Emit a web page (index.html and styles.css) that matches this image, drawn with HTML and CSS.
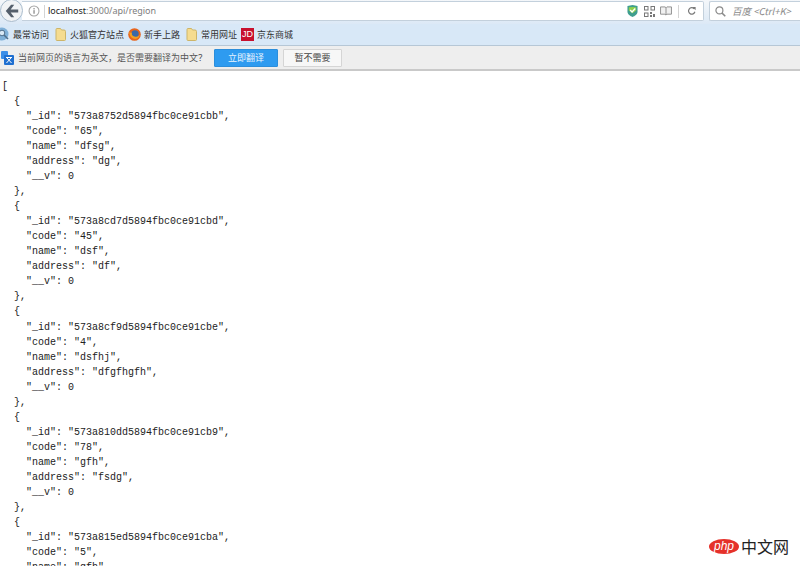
FILE: index.html
```html
<!DOCTYPE html>
<html lang="zh">
<head>
<meta charset="utf-8">
<title>localhost:3000/api/region</title>
<link rel="stylesheet" href="styles.css">
</head>
<body>
<header class="chrome">
  <div class="navbar">
    <div class="back">
      <svg width="18" height="16" viewBox="0 0 20 18"><path d="M9 2 3 9l6 7h3.500L8.500 10.600H17V7.400H8.500L12.500 2z" fill="#555f6b"/></svg>
    </div>
    <div class="urlbar">
      <svg class="info" width="12" height="12" viewBox="0 0 14 14"><circle cx="7" cy="7" r="5.800" fill="none" stroke="#a3a3a3" stroke-width="1.200"/><rect x="6.300" y="6" width="1.500" height="4.200" fill="#8a8a8a"/><rect x="6.300" y="3.600" width="1.500" height="1.500" fill="#8a8a8a"/></svg>
      <span class="sep"></span>
      <span class="url"><span class="host">localhost</span>:3000/api/region</span>
      <span class="spacer"></span>
      <svg class="tool" width="11" height="12" viewBox="0 0 12 13"><path d="M.5 1 6 0l5.500 1v6c0 3-3 5-5.500 6C3.500 12 .5 10 .5 7z" fill="#3f9e8f"/><path d="M2 2.500 6 2l4 .5v3.500l-4 3-4-3z" fill="#8fd04c"/><path d="M3.500 5.500 5.500 7.500 9 3.800" fill="none" stroke="#fff" stroke-width="1.500"/></svg>
      <svg class="tool qr" width="11" height="11" viewBox="0 0 11 11"><g fill="none" stroke="#777"><rect x=".5" y=".5" width="3.500" height="3.500"/><rect x="7" y=".5" width="3.500" height="3.500"/><rect x=".5" y="7" width="3.500" height="3.500"/></g><path d="M6 6h2v2H6zM9 8h2v3H9zM6 9h2v2H6z" fill="#777"/></svg>
      <svg class="tool book" width="12" height="10" viewBox="0 0 13 11"><path d="M.5 1h5L6.500 2 7.500 1h5v8h-5l-1 1-1-1h-5z" fill="#f1f1f1" stroke="#8a8a8a"/><path d="M6.500 2v8" stroke="#8a8a8a"/></svg>
      <span class="sep sep-tool"></span>
      <svg class="reload" width="9" height="10" viewBox="0 0 12 12"><path d="M9.500 3A4.300 4.300 0 1 0 10.500 7" fill="none" stroke="#7a7a7a" stroke-width="1.600"/><path d="M7 .5h4.500V5z" fill="#7a7a7a"/></svg>
    </div>
    <div class="searchbar">
      <svg width="11" height="11" viewBox="0 0 12 12"><circle cx="4.800" cy="4.800" r="3.800" fill="none" stroke="#8a8a8a" stroke-width="1.300"/><path d="m7.600 7.600 3.600 3.600" stroke="#8a8a8a" stroke-width="1.800"/></svg>
      <span class="search-text">百度 &lt;Ctrl+K&gt;</span>
    </div>
  </div>
  <nav class="bookmarks">
    <svg class="mark-first" width="9" height="15" viewBox="0 0 9 15"><circle cx="2" cy="7" r="6.500" fill="#7fb0d8"/><circle cx="2" cy="6" r="2.800" fill="#d9e9f6" stroke="#4f6f8c"/><path d="m4 8 4 4" stroke="#4f6f8c" stroke-width="1.600"/></svg>
    <span class="mark">最常访问</span>
    <svg class="folder" width="11" height="13" viewBox="0 0 11 13"><path d="M1 1.500Q1 .5 2 .5h3.500l1 1.500H9q1.500 0 1.500 1.500v8q0 1-1 1H2q-1 0-1-1z" fill="#f5dc90" stroke="#cdb569"/></svg>
    <span class="mark">火狐官方站点</span>
    <svg class="fox" width="13" height="13" viewBox="0 0 13 13"><circle cx="6.500" cy="6.500" r="6.300" fill="#e8641c"/><circle cx="7" cy="6" r="3.700" fill="#3a69a8"/><path d="M1 4Q2 11 7.500 11 11 10.500 11.800 6.500 10 9.500 6.500 8.500 3 7.500 4 4.500 2.500 5 1 4z" fill="#f0a022"/></svg>
    <span class="mark">新手上路</span>
    <svg class="folder" width="11" height="13" viewBox="0 0 11 13"><path d="M1 1.500Q1 .5 2 .5h3.500l1 1.500H9q1.500 0 1.500 1.500v8q0 1-1 1H2q-1 0-1-1z" fill="#f5dc90" stroke="#cdb569"/></svg>
    <span class="mark">常用网址</span>
    <span class="jd">JD</span>
    <span class="mark">京东商城</span>
  </nav>
  <div class="translate">
    <svg class="tr-icon" width="13" height="14" viewBox="0 0 13 14"><rect x="0" y="0" width="7" height="8" rx="1" fill="#3b8ee8"/><rect x="3" y="4" width="10" height="10" rx="1" fill="#1f6fd0"/><path d="M5 6.500h6M6 7l4.500 5M10 7l-4.500 5" fill="none" stroke="#fff" stroke-width="1"/></svg>
    <span class="tr-text">当前网页的语言为英文，是否需要翻译为中文？</span>
    <button class="btn btn-primary">立即翻译</button>
    <button class="btn btn-plain">暂不需要</button>
  </div>
</header>
<main>
<pre class="json">[
  {
    "_id": "573a8752d5894fbc0ce91cbb",
    "code": "65",
    "name": "dfsg",
    "address": "dg",
    "__v": 0
  },
  {
    "_id": "573a8cd7d5894fbc0ce91cbd",
    "code": "45",
    "name": "dsf",
    "address": "df",
    "__v": 0
  },
  {
    "_id": "573a8cf9d5894fbc0ce91cbe",
    "code": "4",
    "name": "dsfhj",
    "address": "dfgfhgfh",
    "__v": 0
  },
  {
    "_id": "573a810dd5894fbc0ce91cb9",
    "code": "78",
    "name": "gfh",
    "address": "fsdg",
    "__v": 0
  },
  {
    "_id": "573a815ed5894fbc0ce91cba",
    "code": "5",
    "name": "gfh"</pre>
</main>
<div class="watermark">
  <span class="php">php</span>
  <span class="cn">中文网</span>
</div>
</body>
</html>
```

FILE: styles.css
```css
html, body {
  margin: 0;
  height: 100%;
  overflow: hidden;
  background: #fff;
}
body {
  position: relative;
  font-family: "Noto Sans CJK SC", "Liberation Sans", sans-serif;
}
.chrome {
  height: 71px;
  box-sizing: border-box;
  display: flex;
  flex-direction: column;
}
.navbar {
  height: 24px;
  background: linear-gradient(#f4f7fa, #dce9f6);
  display: flex;
  align-items: flex-start;
}
.back {
  width: 21px;
  height: 21px;
  border-radius: 50%;
  background: #f1f3f5;
  border: 1px solid #a9bccd;
  margin: -1px 0 0 0;
  display: flex;
  align-items: center;
  justify-content: center;
  flex: none;
  z-index: 1;
}
.urlbar {
  flex: 1;
  height: 18px;
  margin: 1px 0 0 -1px;
  background: #fff;
  border: 1px solid #c3d0dc;
  border-left: 0;
  display: flex;
  align-items: center;
  padding-left: 6px;
  border-radius: 0 2px 2px 0;
}
.info { margin-left: 0; margin-top: -1px; flex: none; }
.sep {
  width: 1px;
  height: 13px;
  background: #d4d4d4;
  margin: 0 3px 0 4px;
  flex: none;
}
.url {
  font-family: "Noto Sans", "Liberation Sans", sans-serif;
  font-size: 9px;
  color: #7d7d7d;
  line-height: 18px;
}
.host { color: #222; }
.spacer { flex: 1; }
.tool { flex: none; }
.qr { margin-left: 6px; }
.book { margin-left: 5px; }
.sep-tool { margin: 0 8px 0 6px; }
.reload { margin-right: 7px; flex: none; }
.searchbar {
  width: 85px;
  height: 18px;
  margin: 1px 0 0 5px;
  background: #fff;
  border: 1px solid #c3d0dc;
  border-right: 0;
  display: flex;
  align-items: center;
  padding-left: 5px;
  gap: 6px;
  flex: none;
  border-radius: 2px 0 0 2px;
}
.search-text {
  font-style: italic;
  font-size: 9.500px;
  color: #8b8b8b;
  white-space: nowrap;
}
.bookmarks {
  height: 22px;
  background: #d8e8f7;
  border-bottom: 1px solid #b6c7d6;
  box-sizing: border-box;
  display: flex;
  align-items: center;
  overflow: hidden;
}
.mark-first { margin-right: 4px; flex: none; }
.mark {
  font-size: 9px;
  line-height: 14px;
  color: #333;
  white-space: nowrap;
}
.folder { margin: 0 4px 0 6px; flex: none; }
.fox { margin: 0 3px 0 4px; flex: none; }
.jd {
  width: 13px;
  height: 13px;
  margin: 0 3px 0 4px;
  background: #c8102e;
  color: #fff;
  font-family: "Liberation Sans", sans-serif;
  font-size: 9px;
  line-height: 13px;
  text-align: center;
  flex: none;
}
.translate {
  height: 25px;
  background: #eeeeee;
  border-bottom: 2px solid #c9c9c9;
  box-sizing: border-box;
  display: flex;
  align-items: center;
}
.tr-icon { margin: 0 4px 0 1px; flex: none; }
.tr-text {
  font-size: 9px;
  color: #555;
  white-space: nowrap;
  width: 196px;
}
.btn {
  font-family: inherit;
  font-size: 9px;
  height: 18px;
  padding: 0;
  line-height: 16px;
  border-radius: 1px;
  flex: none;
}
.btn-primary {
  width: 64px;
  color: #eaf5ff;
  background: #2e9bf0;
  border: 1px solid #2c8edb;
  margin-right: 5px;
}
.btn-plain {
  width: 59px;
  color: #444;
  background: #f7f7f7;
  border: 1px solid #d5d5d5;
}
.json {
  margin: 0;
  padding: 8px 0 0 2px;
  font-family: "Liberation Mono", monospace;
  font-size: 10px;
  line-height: 15.030px;
  color: #222;
}
.watermark {
  position: absolute;
  left: 709px;
  bottom: 12px;
  display: flex;
  align-items: center;
  gap: 2px;
}
.php {
  width: 30px;
  height: 15px;
  border-radius: 50%;
  background: #e5312a;
  color: #fff;
  font-family: "Liberation Sans", sans-serif;
  font-style: italic;
  font-size: 12px;
  line-height: 14px;
  text-align: center;
  flex: none;
}
.cn {
  font-size: 16px;
  line-height: 16px;
  color: #222;
  white-space: nowrap;
}
```
